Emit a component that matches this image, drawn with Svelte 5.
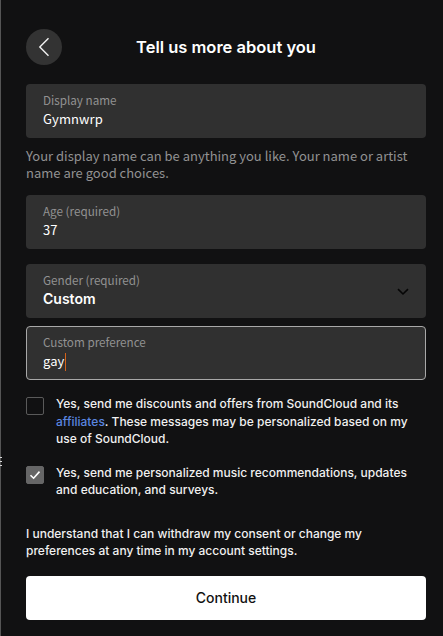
<script>
  const fields = [
    { label: 'Age (required)', value: '37' }
  ];
</script>

<div class="page">
  <div class="edge"><i></i><i></i><i></i></div>
  <main class="panel">
    <header class="head">
      <button class="back" aria-label="Back">
        <svg width="14" height="20" viewBox="0 0 14 20" fill="none"><path d="M11.5 1.2 2.8 10l8.7 8.8" stroke="#f2f2f2" stroke-width="1.4"/></svg>
      </button>
      <h1>Tell us more about you</h1>
    </header>

    <div class="field">
      <span class="label">Display name</span>
      <span class="value">Gymnwrp</span>
    </div>
    <p class="help">Your display name can be anything you like. Your name or artist name are good choices.</p>

    {#each fields as f}
      <div class="field age">
        <span class="label">{f.label}</span>
        <span class="value">{f.value}</span>
      </div>
    {/each}

    <div class="field gender">
      <span class="label">Gender (required)</span>
      <span class="value bold">Custom</span>
      <svg class="chev" width="12" height="8" viewBox="0 0 12 8" fill="none"><path d="M1 1.2 6 6l5-4.8" stroke="#050505" stroke-width="1.6"/></svg>
    </div>

    <div class="field custom">
      <span class="label">Custom preference</span>
      <span class="value">gay<i class="caret"></i></span>
    </div>

    <div class="check first">
      <span class="box"></span>
      <p>Yes, send me discounts and offers from SoundCloud and its <a href="#top">affiliates</a>. These messages may be personalized based on my use of SoundCloud.</p>
    </div>
    <div class="check second">
      <span class="box on">
        <svg width="12" height="10" viewBox="0 0 12 10" fill="none"><path d="M1.5 5.2 4.6 8.2 10.5 1.6" stroke="#fff" stroke-width="1.6"/></svg>
      </span>
      <p>Yes, send me personalized music recommendations, updates and education, and surveys.</p>
    </div>

    <p class="note">I understand that I can withdraw my consent or change my preferences at any time in my account settings.</p>
    <button class="continue">Continue</button>
  </main>
</div>

<style>
  :global(body) { margin: 0; background: #111112; }
  .page { width: 443px; height: 636px; display: flex; overflow: hidden; background: #111112; font-family: Inter, "Liberation Sans", sans-serif; }
  .edge { width: 1px; background: #555; flex: none; position: relative; }
  .edge i { display: block; position: absolute; left: 0; width: 2px; height: 1px; background: #d8d8d8; }
  .edge i:nth-child(1) { top: 457px; }
  .edge i:nth-child(2) { top: 461px; }
  .edge i:nth-child(3) { top: 465px; }
  .panel { width: 400px; margin-left: 25px; flex: none; display: flex; flex-direction: column; }
  .head { display: flex; align-items: center; height: 36px; margin-top: 29px; position: relative; }
  .back { width: 36px; height: 36px; border-radius: 50%; border: 0; background: #333; padding: 0; display: flex; align-items: center; justify-content: center; }
  h1 { position: absolute; left: 0; right: 0; margin: 0; text-align: center; font-size: 16.5px; line-height: 20px; font-weight: 600; color: #fff; }
  .field { box-sizing: border-box; height: 54px; background: #303030; border-radius: 4px; padding: 7px 17px 0; display: flex; flex-direction: column; position: relative; }
  .head + .field { margin-top: 19px; }
  .label { font-family: "Noto Sans CJK KR", "Noto Sans", sans-serif; font-size: 11.7px; line-height: 17px; margin-bottom: 1px; color: #929292; }
  .value { font-family: "Noto Sans CJK KR", "Noto Sans", sans-serif; font-size: 13px; line-height: 19px; color: #fff; letter-spacing: 0.1px; }
  .value.bold { font-family: Inter, sans-serif; font-size: 14px; line-height: 20px; font-weight: 600; letter-spacing: 0; }
  .help { margin: 9px 0 0; font-family: "Noto Sans CJK KR", "Noto Sans", sans-serif; font-size: 13px; line-height: 17px; color: #929292; }
  .age { margin-top: 14px; }
  .gender { margin-top: 15px; }
  .chev { position: absolute; right: 17px; top: 24px; }
  .custom { margin-top: 8px; border: 1px solid #a8a8a8; padding: 6px 16px 0; }
  .caret { display: inline-block; width: 1px; height: 18px; background: #d4621a; vertical-align: -5px; }
  .check { display: flex; gap: 12px; }
  .check p { margin: 0; font-size: 12px; line-height: 17.5px; font-weight: 500; color: #f0f0f0; }
  .check a { color: #5a86e0; text-decoration: none; }
  .first { margin-top: 15px; }
  .second { margin-top: 16px; }
  .box { width: 18px; height: 18px; box-sizing: border-box; border: 1px solid #5a5a5a; border-radius: 2px; flex: none; margin-top: 2px; display: flex; align-items: center; justify-content: center; }
  .box.on { background: #666; border-color: #666; }
  .note { margin: 26px 0 0; font-size: 12px; line-height: 17.5px; font-weight: 500; color: #f0f0f0; }
  .continue { margin-top: 16px; height: 44px; background: #fff; border: 0; border-radius: 4px; font-family: Inter, sans-serif; font-size: 14px; font-weight: 450; color: #111; }
</style>
